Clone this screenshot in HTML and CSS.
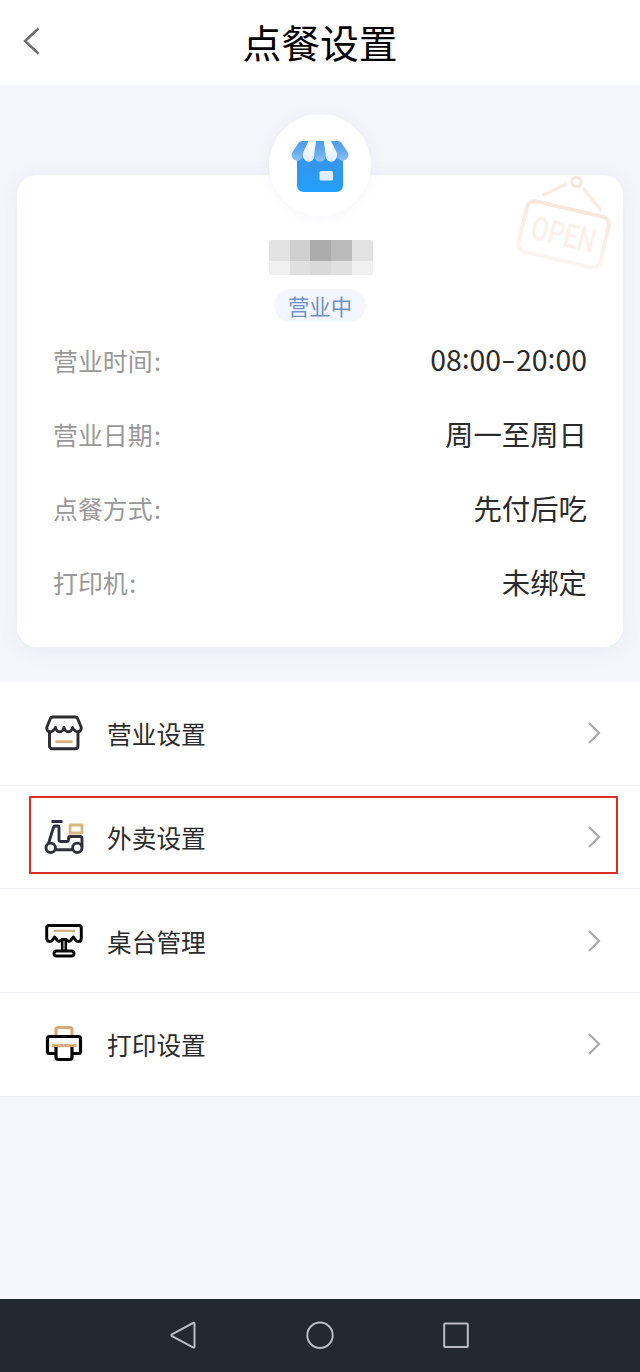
FILE: index.html
```html
<!DOCTYPE html>
<html lang="zh-CN">
<head>
<meta charset="utf-8">
<title>点餐设置</title>
<link rel="stylesheet" href="styles.css">
</head>
<body>
<div class="screen">
  <header class="topbar">
    <svg class="back" width="20" height="30" viewBox="0 0 20 30"><path d="M16.500 2.500L3 15L16.500 27.500" fill="none" stroke="#6b6b6b" stroke-width="2.400"/></svg>
    <h1 class="title">点餐设置</h1>
  </header>

  <section class="summary">
    <div class="card">
      <div class="avatar">
        <svg width="58" height="54" viewBox="0 0 58 54">
          <defs>
            <linearGradient id="body" x1="0" y1="0" x2="0" y2="1"><stop offset="0" stop-color="#3b93ea"/><stop offset="1" stop-color="#1fa0fb"/></linearGradient>
            <linearGradient id="blue" x1="0" y1="0" x2="0" y2="1"><stop offset="0" stop-color="#4a9dec"/><stop offset=".5" stop-color="#62a9ef"/><stop offset="1" stop-color="#8fc2f9"/></linearGradient>
            <linearGradient id="pale" x1="0" y1="0" x2="0" y2="1"><stop offset="0" stop-color="#ffffff"/><stop offset="1" stop-color="#dceeff"/></linearGradient>
          </defs>
          <path d="M6 14H52V46Q52 53 45 53H13Q6 53 6 46Z" fill="url(#body)"/>
          <path d="M11 2H18.500L12 14V16A5.700 5.700 0 0 1 .600 16Q.600 14 2 12L8 3.500Q9 2 11 2Z" fill="url(#blue)"/>
          <path d="M17.500 2H25.500L23.400 14V17A5.700 5.700 0 0 1 12 17V14Z" fill="url(#pale)"/>
          <path d="M25 2H33L34.600 14V17A5.600 5.600 0 0 1 23.400 17V14Z" fill="url(#blue)"/>
          <path d="M33 2H40.500L46 14V17A5.700 5.700 0 0 1 34.600 17V14Z" fill="url(#pale)"/>
          <path d="M40 2H47Q49 2 50 3.500L56 12Q57.400 14 57.400 16A5.700 5.700 0 0 1 46 16V14Z" fill="url(#blue)"/>
          <rect x="28.500" y="32" width="13.500" height="9.500" rx="1.500" fill="#e3effc"/>
        </svg>
      </div>

      <svg class="open-sign" width="100" height="100" viewBox="0 0 100 100" fill="none">
        <defs><linearGradient id="sign" x1="0" y1="0" x2="0" y2="1"><stop offset="0" stop-color="#f8e8dc"/><stop offset="1" stop-color="#fcf5ef"/></linearGradient></defs>
        <circle cx="61.500" cy="7" r="4.700" stroke="#f6e6d9" stroke-width="3"/>
        <path d="M52 9L27 20.500M68 13L86 35.500" stroke="#f9ebe0" stroke-width="3.200"/>
        <g transform="rotate(13 49 60)">
          <rect x="6.500" y="33.500" width="84" height="52" rx="8" stroke="url(#sign)" stroke-width="4"/>
          <text x="16" y="71" class="sign-text" textLength="65" lengthAdjust="spacingAndGlyphs">OPEN</text>
        </g>
      </svg>

      <div class="mosaic">
        <i class="m1"></i><i class="m2"></i><i class="m3"></i><i class="m4"></i><i class="m1"></i>
        <i class="m5"></i><i class="m6"></i><i class="m7"></i><i class="m6"></i><i class="m5"></i>
      </div>
      <div class="status">营业中</div>

      <dl class="info">
        <div class="info-row"><dt>营业时间<span class="colon">:</span></dt><dd class="hours">08<span class="sep">:</span>00<span class="dash">-</span>20<span class="sep">:</span>00</dd></div>
        <div class="info-row"><dt>营业日期<span class="colon">:</span></dt><dd>周一至周日</dd></div>
        <div class="info-row"><dt>点餐方式<span class="colon">:</span></dt><dd>先付后吃</dd></div>
        <div class="info-row"><dt>打印机<span class="colon">:</span></dt><dd>未绑定</dd></div>
      </dl>
    </div>
  </section>

  <nav class="menu">
    <div class="item">
      <svg class="icon" width="40" height="40" viewBox="0 0 40 40" fill="none" stroke="#2b2b30" stroke-width="2.900" stroke-linejoin="round">
        <path d="M5.500 18.500V33Q5.500 35.700 8.200 35.700H31.300Q34 35.700 34 33V18.500"/>
        <path d="M8.500 4H31.500Q33 4 33.600 5.500L37.300 14.500Q37.200 18.800 34 18.800Q30.500 18.800 28.500 14.500Q27.500 18.800 24.300 18.800Q21 18.800 20 14.500Q19 18.800 15.700 18.800Q12.500 18.800 11.500 14.500Q9.500 18.800 6 18.800Q2.800 18.800 2.700 14.500L6.400 5.500Q7 4 8.500 4Z"/>
        <path d="M11.500 28.700H28.500" stroke="#dcae7c"/>
      </svg>
      <span class="label">营业设置</span>
      <svg class="chevron" width="14" height="24" viewBox="0 0 14 24"><path d="M2 2L12 12L2 22"/></svg>
    </div>
    <div class="item item-marked">
      <svg class="icon" width="40" height="40" viewBox="0 0 40 40" fill="none" stroke="#2f303b" stroke-width="2.900" stroke-linejoin="round">
        <path d="M7.500 4.500H18.500M4.500 26.500L9.300 11Q9.800 9 11.500 9H13.500Q15 9 15 10.500V22.500Q15 24.500 17 24.500H22.500Q24.500 24.500 24.500 22.500V21.500Q24.500 19.500 26.500 19.500H36Q38 19.500 38 21.500V30M11.500 32.800H28"/>
        <circle cx="6.700" cy="30.800" r="4.700"/><circle cx="33.300" cy="30.800" r="4.700"/>
        <rect x="26" y="8" width="12" height="8" stroke="#dbb57e" stroke-width="2.800"/>
      </svg>
      <span class="label">外卖设置</span>
      <svg class="chevron" width="14" height="24" viewBox="0 0 14 24"><path d="M2 2L12 12L2 22"/></svg>
    </div>
    <div class="item">
      <svg class="icon" width="40" height="40" viewBox="0 0 40 40" fill="none" stroke="#050505" stroke-width="3" stroke-linejoin="round">
        <path d="M5 4.500H35Q37.300 4.500 37.300 6.800V16.500Q37.300 20.500 34.500 20.500Q32.500 20.500 31.500 19L29.500 16L26.500 19.500Q25 21 23.500 19.500L22 18.500H18L16.500 19.500Q15 21 13.500 19.500L10.500 16L8.500 19Q7.500 20.500 5.500 20.500Q2.700 20.500 2.700 16.500V6.800Q2.700 4.500 5 4.500Z"/>
        <path d="M18.200 18V30M21.800 18V30" stroke-width="2.600"/>
        <path d="M12.500 30H27.500Q30 30 30 32.500T27.500 35H12.500Q10 35 10 32.500T12.500 30Z"/>
        <path d="M9.500 9.800H31" stroke="#cdb183" stroke-width="2.200"/>
      </svg>
      <span class="label">桌台管理</span>
      <svg class="chevron" width="14" height="24" viewBox="0 0 14 24"><path d="M2 2L12 12L2 22"/></svg>
    </div>
    <div class="item">
      <svg class="icon" width="40" height="40" viewBox="0 0 40 40" fill="none" stroke="#050505" stroke-width="3.200" stroke-linejoin="round">
        <path d="M12 12V5.500Q12 3.500 14 3.500H26Q28 3.500 28 5.500V12" stroke="#d9a978"/>
        <path d="M12 29.500H5.500Q3.500 29.500 3.500 27.500V14.500Q3.500 12.500 5.500 12.500H34.500Q36.500 12.500 36.500 14.500V27.500Q36.500 29.500 34.500 29.500H28"/>
        <path d="M12 23V33Q12 35.500 14.500 35.500H25.500Q28 35.500 28 33V23"/>
        <path d="M8 21.500H32.500" stroke="#d9a978" stroke-width="2.800"/>
      </svg>
      <span class="label">打印设置</span>
      <svg class="chevron" width="14" height="24" viewBox="0 0 14 24"><path d="M2 2L12 12L2 22"/></svg>
    </div>
  </nav>

  <footer class="navbar">
    <svg width="30" height="30" viewBox="0 0 30 30"><path d="M24 3Q25.500 2.500 25.500 3.600V26.800Q25.500 27.900 24 27.400L3 16.200Q1.800 15.200 3 14.300Z"/></svg>
    <svg width="30" height="30" viewBox="0 0 30 30"><circle cx="15" cy="15.300" r="12.700"/></svg>
    <svg width="30" height="30" viewBox="0 0 30 30"><rect x="3.200" y="3.500" width="23.600" height="23.600" rx=".8"/></svg>
  </footer>
</div>
</body>
</html>
```

FILE: styles.css
```css
*,
*::after { box-sizing: border-box; }

body {
  margin: 0;
  font-family: "Noto Sans CJK SC", "Noto Sans", sans-serif;
  color: #2b2b2b;
}

.screen {
  display: flex;
  flex-direction: column;
  width: 640px;
  height: 1372px;
  overflow: hidden;
  background: #f5f6fb;
}

.topbar {
  display: grid;
  grid-template-columns: 64px 1fr 64px;
  align-items: center;
  height: 85px;
  background: #fff;
}

.back { margin-left: 22px; margin-top: -4px; }

.title {
  margin: 0;
  font-size: 38.800px;
  line-height: 83px;
  height: 85px;
  font-weight: 400;
  text-align: center;
  color: #000;
}

.summary {
  height: 597px;
  padding: 90px 17px 0;
}

.card {
  position: relative;
  display: flex;
  flex-direction: column;
  align-items: center;
  width: 606px;
  height: 472px;
  border-radius: 20px;
  background: #fff;
  box-shadow: 0 3px 20px rgba(100, 120, 190, .09);
}

.avatar {
  display: flex;
  align-items: center;
  justify-content: center;
  flex: none;
  width: 102px;
  height: 102px;
  margin-top: -61px;
  padding-top: 2px;
  border-radius: 50%;
  background: #fff;
  box-shadow: 0 0 14px rgba(100, 120, 180, .07);
}

.open-sign {
  position: absolute;
  top: 0;
  right: 8px;
  overflow: visible;
}

.sign-text {
  font-family: Roboto, sans-serif;
  font-size: 33px;
  font-weight: 500;
  fill: #fbf1e9;
}

.mosaic {
  display: grid;
  grid-template-columns: 21px 20px 21px 21px 21px;
  grid-template-rows: 21px 14px;
  width: 104px;
  margin: 24px 0 14px 2px;
  border-radius: 2px;
  overflow: hidden;
}

.m1 { background: #e3e3e3; }
.m2 { background: #cfcfcf; }
.m3 { background: #acacac; }
.m4 { background: #bababa; }
.m5 { background: #f0f0f0; }
.m6 { background: #e0e0e0; }
.m7 { background: #d9d9d9; }

.status {
  width: 92px;
  height: 33px;
  border-radius: 17px;
  background: #f3f7fd;
  color: #6d92c9;
  font-size: 21.300px;
  line-height: 33px;
  text-align: center;
}

.info {
  width: 100%;
  margin: 1px 0 0;
  padding: 0 36px;
}

.info-row {
  display: flex;
  align-items: center;
  justify-content: space-between;
  height: 74px;
}

.info-row dt { font-size: 24.900px; color: #999; }
.info-row dd { margin: 0; padding-bottom: 2px; font-size: 28.400px; }
.info-row .hours { padding-bottom: 3px; font-size: 28.400px; }

.colon { margin-left: 1.500px; }
.sep,
.dash { display: inline-block; }
.sep { transform: translateY(-2px); }
.dash { width: 15px; text-align: center; transform: translateY(-1px) scaleX(1.450); }

.menu { background: #fff; }

.item {
  position: relative;
  display: flex;
  align-items: center;
  height: 103.700px;
  padding: 0 39px 0 44px;
  border-bottom: 1px solid #eeeff2;
}

.item-marked::after {
  content: "";
  position: absolute;
  left: 29px;
  top: 10px;
  width: 589px;
  height: 78px;
  border: 2px solid #dc2b2b;
  border-radius: 1px;
}

.label {
  flex: 1;
  margin-left: 23px;
  font-size: 24.700px;
}

.chevron {
  fill: none;
  stroke: #ababab;
  stroke-width: 2.200;
}

.navbar {
  display: flex;
  justify-content: center;
  gap: 106px;
  height: 73px;
  margin-top: auto;
  padding-top: 21px;
  background: #222931;
}

.navbar svg {
  fill: none;
  stroke: #b9bcc2;
  stroke-width: 2;
}
```
